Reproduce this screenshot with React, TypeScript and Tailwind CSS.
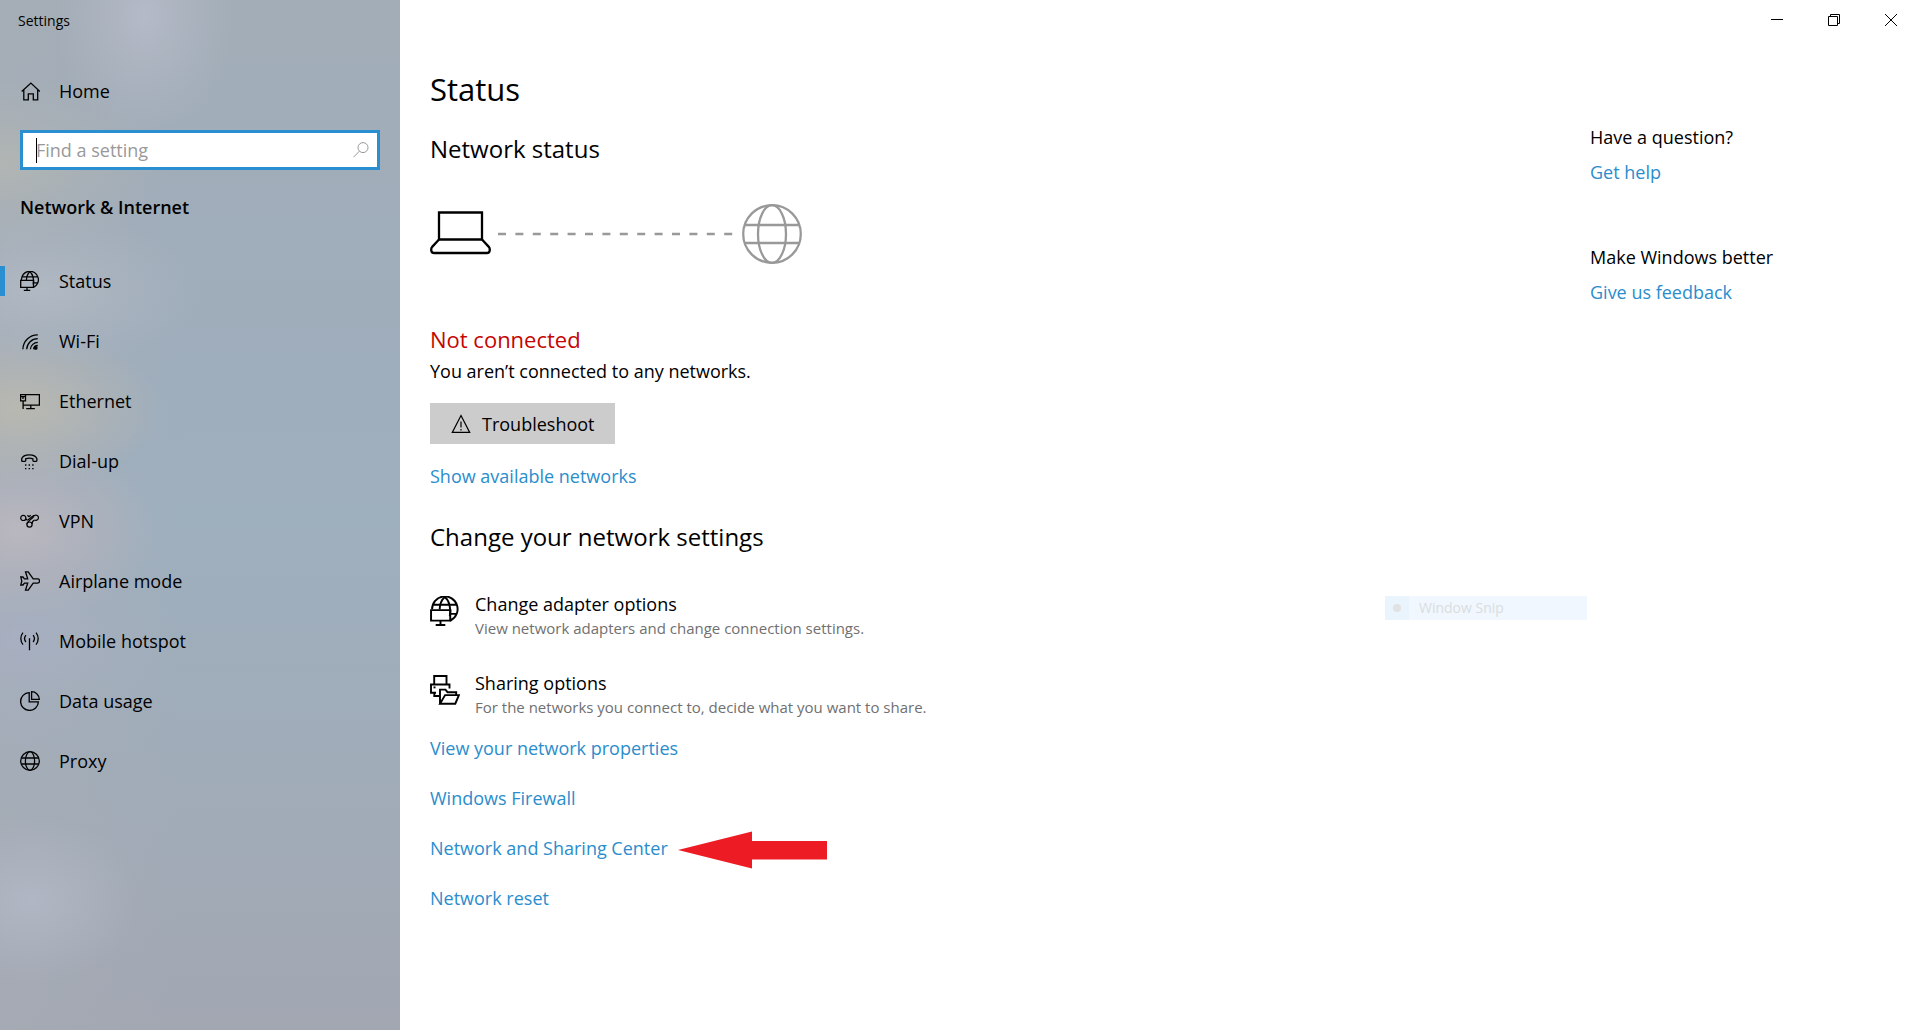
import type { ReactNode } from 'react'

type IconProps = { className?: string }

const StrokeIcon = ({ className = 'size-5', children }: IconProps & { children: ReactNode }) => (
  <svg viewBox="0 0 20 20" fill="none" stroke="currentColor" strokeWidth="1.3" className={className} aria-hidden>
    {children}
  </svg>
)

const HomeIcon = () => (
  <StrokeIcon>
    <path d="M1.7 10.6 10.9 2.1l9 8.5M3.8 9v9.8h4.5v-5.9h5v5.9h4.4V9" />
  </StrokeIcon>
)

const NetworkIcon = ({ className }: IconProps) => (
  <StrokeIcon className={className}>
    <path d="M1.4 8.9a8.5 8.5 0 1 1 12 7.6M2.2 5.8h15.6M13.6 11.9h4.6" />
    <path d="M9.9.7C7.6 2.6 6.6 5.4 6.4 9M9.9.7c2.8 2.2 4.4 7.6 3.3 12.8" />
    <path d="M.7 9.4h12.8v7H.7zM7 16.4v2.9M3.8 19.3h6.4" />
  </StrokeIcon>
)

const WifiIcon = () => (
  <StrokeIcon>
    <path d="M2.9 18.3A14.6 14.6 0 0 1 17.8 3.9M6.7 18.3A11 11 0 0 1 17.8 7.7M10.4 18.3a7.4 7.4 0 0 1 7.4-6.9M13.6 18.3a4.2 4.2 0 0 1 4.2-3.8" />
    <circle cx="15.7" cy="16.9" r="1.3" fill="currentColor" />
  </StrokeIcon>
)

const EthernetIcon = () => (
  <StrokeIcon>
    <path d="M5.5 3.6h13.9v10.6H3.2M10.8 14.2v3.5M6.2 17.6h8.6M3.1 10v8" />
    <path d="M.6 3.6h4.9v6.2H.6zM.6 5.6h4.9M3 5.6V8" />
  </StrokeIcon>
)

const DialUpIcon = () => (
  <StrokeIcon>
    <path d="M1.7 9.6V7.8C3.3 2.5 15.3 2.5 16.9 7.8v1.8q0 .8-.8.8h-2.4q-.8 0-.8-.8V7.8q-3.6-1.2-7.2 0v1.8q0 .8-.8.8H2.5q-.8 0-.8-.8Z" />
    <path d="M5 14h1.4M8.6 14H10M12.2 14h1.4M5 17.7h1.4M8.6 17.7H10M12.2 17.7h1.4" />
  </StrokeIcon>
)

const VpnIcon = () => (
  <StrokeIcon>
    <g strokeWidth="1.2">
      <circle cx="3.3" cy="6.9" r="2.6" />
      <circle cx="9.5" cy="13.6" r="2.6" />
      <path d="M13.3 6.3a2.6 2.6 0 1 1 1.3 2.7M5.7 7.9c.9 1.4 2 1.4 3.2.4l3.7-3.1c.9-.8 1.900-1 3.1-.9" />
      <path d="M6.900 13.200c0-1.700.900-2.400 2.100-3.300l4.300-3.600M12 13c0-2.200.900-3.200 2.600-4" />
      <path d="M7.400 4.200 9 5.600l1.700-1.400" />
    </g>
  </StrokeIcon>
)

const AirplaneIcon = () => (
  <StrokeIcon>
    <path d="M5.5.8h2.7l5 7.100h4.400c2.600 0 2.600 4.200 0 4.200h-4.400l-5 7.100H5.500l2.200-7.100H4.400L3 14H.8l1-4-1-4H3l1.400 1.900h3.300Z" />
  </StrokeIcon>
)

const HotspotIcon = () => (
  <StrokeIcon>
    <path d="M9.5 7.200v12M5.900 4.200c-1.600 2-1.600 4.800 0 6.800M13.100 4.200c1.600 2 1.600 4.800 0 6.800M3 1.600C.1 5 .1 10.200 3 13.600M16 1.600c2.900 3.400 2.900 8.600 0 12" />
  </StrokeIcon>
)

const DataUsageIcon = () => (
  <StrokeIcon>
    <path d="M9.2 1.6a8.9 8.9 0 1 0 9.2 9.2H9.2Z" />
    <path d="M11.6.7v7.6h7.7A7.7 7.7 0 0 0 11.6.7Z" />
  </StrokeIcon>
)

const GlobeIcon = ({ className }: IconProps) => (
  <StrokeIcon className={className}>
    <circle cx="10" cy="10" r="9.3" />
    <ellipse cx="10" cy="10" rx="4.6" ry="9.3" />
    <path d="M1.2 7h17.6M1.2 13h17.6" />
  </StrokeIcon>
)

const SearchIcon = () => (
  <svg viewBox="0 0 16 16" fill="none" stroke="currentColor" className="size-4" aria-hidden>
    <circle cx="10" cy="5.6" r="5" />
    <path d="M6.4 9.2.5 15.2" />
  </svg>
)

const SharingIcon = () => (
  <svg viewBox="0 0 30 30" fill="none" stroke="currentColor" strokeWidth="1.9" className="size-[30px]" aria-hidden>
    <path d="M4.2 9.5V1h12.3v8.5M6 17.8H1V9.5h18.5v4M4.3 17.5v3.5h4.9" />
    <path d="M3.5 12.4h2" />
    <path d="M10 28.7V14.6h5.5l2 2.6h8.7v2.9M10 28.7h15.3l3.6-8.6H15.1L10 28.7Z" />
  </svg>
)

const WarningIcon = () => (
  <StrokeIcon>
    <path d="M10 1.5 18.7 18.4H1.3ZM10 7.5v6M10 15v1.5" strokeWidth="1.2" />
  </StrokeIcon>
)

const NAV_ITEMS = [
  { label: 'Status', icon: <NetworkIcon />, active: true },
  { label: 'Wi-Fi', icon: <WifiIcon /> },
  { label: 'Ethernet', icon: <EthernetIcon /> },
  { label: 'Dial-up', icon: <DialUpIcon /> },
  { label: 'VPN', icon: <VpnIcon /> },
  { label: 'Airplane mode', icon: <AirplaneIcon /> },
  { label: 'Mobile hotspot', icon: <HotspotIcon /> },
  { label: 'Data usage', icon: <DataUsageIcon /> },
  { label: 'Proxy', icon: <GlobeIcon /> },
]

const OPTIONS = [
  {
    title: 'Change adapter options',
    text: 'View network adapters and change connection settings.',
    icon: <NetworkIcon className="size-[30px]" />,
  },
  {
    title: 'Sharing options',
    text: 'For the networks you connect to, decide what you want to share.',
    icon: <SharingIcon />,
  },
]

const Link = ({ children }: { children: ReactNode }) => (
  <a href="#" className="text-[#2a8dcd]">
    {children}
  </a>
)

const Sidebar = () => (
  <aside className="w-100 shrink-0 bg-[radial-gradient(ellipse_90px_120px_at_145px_15px,#b9bdcbcc,#b3b9c677_50%,transparent),radial-gradient(ellipse_160px_90px_at_0px_165px,#b4b8b2cc,#b0b5b466_50%,transparent),radial-gradient(ellipse_160px_80px_at_40px_290px,#b4bcc5cc,#b0b9c366_50%,transparent),radial-gradient(ellipse_140px_80px_at_20px_408px,#bab9b0ee,#b5b6b299_50%,transparent),radial-gradient(ellipse_140px_90px_at_20px_530px,#bdb8bfdd,#b6b4bc88_50%,transparent),radial-gradient(ellipse_160px_110px_at_20px_640px,#a9b0c4aa,#a7afbf66_50%,transparent),radial-gradient(ellipse_110px_85px_at_30px_900px,#b2b9c6dd,#aeb5c199_50%,transparent),linear-gradient(to_right,#a9adb577,transparent_45%),linear-gradient(#a2adb7,#9fadbb_30%,#9eafbe_50%,#a0acb8_75%,#a2a7b2)]">
    <p className="px-[18px] pt-[11px] text-[14px] leading-5">Settings</p>
    <a href="#" className="mt-[30px] flex h-15 items-center gap-[19px] px-5">
      <HomeIcon />
      Home
    </a>
    <label className="relative mx-5 mt-[9px] flex h-10 items-center border-[3px] border-[#2a8fd0] bg-white pr-2 text-[#999]">
      <span className="absolute left-[13px] h-[25px] w-px bg-black" />
      <input
        type="text"
        aria-label="Find a setting"
        placeholder="Find a setting"
        className="min-w-0 flex-1 pl-[13px] text-black outline-none placeholder:text-[#999]"
      />
      <SearchIcon />
    </label>
    <h2 className="mt-[25px] px-5 font-semibold">Network &amp; Internet</h2>
    <nav className="mt-8">
      {NAV_ITEMS.map(({ label, icon, active }) => (
        <a
          key={label}
          href="#"
          aria-current={active ? 'page' : undefined}
          className="flex h-15 items-center"
        >
          <span className={active ? 'h-[30px] w-[5px] bg-[#2a8fd0]' : 'w-[5px]'} />
          <span className="ml-[15px] mr-[19px]">{icon}</span>
          {label}
        </a>
      ))}
    </nav>
  </aside>
)

const WindowControls = () => (
  <div className="flex h-10 justify-end pr-px">
    <button aria-label="Minimize" className="flex h-10 w-[57px] items-center justify-center">
      <svg viewBox="0 0 12 12" stroke="currentColor" fill="none" className="size-3" aria-hidden>
        <path d="M0 5.5h12" />
      </svg>
    </button>
    <button aria-label="Restore" className="flex h-10 w-[57px] items-center justify-center">
      <svg viewBox="0 0 12 12" stroke="currentColor" fill="none" className="size-3" aria-hidden>
        <path d="M.5 2.5h9v9h-9zM2.5 2.5v-2h9v9h-2" />
      </svg>
    </button>
    <button aria-label="Close" className="flex h-10 w-[57px] items-center justify-center">
      <svg viewBox="0 0 12 12" stroke="currentColor" fill="none" className="size-3" aria-hidden>
        <path d="m0 0 12 12M12 0 0 12" />
      </svg>
    </button>
  </div>
)

const ConnectionDiagram = () => (
  <svg viewBox="0 0 373 60" fill="none" strokeWidth="2.3" className="mt-[39px] h-[60px] w-[373px]" aria-hidden>
    <g stroke="#000">
      <path d="M9 8.5h43v27H9z" />
      <path d="M9 35.5 2.4 42.6c-2 2.3-1.4 6.4 1.6 6.4h53c3 0 3.6-4.1 1.6-6.4L52 35.5" />
    </g>
    <g stroke="#999">
      <path d="M68 30h235" strokeDasharray="8 9.4" />
      <circle cx="342" cy="30" r="28.8" />
      <ellipse cx="342" cy="30" rx="14" ry="28.8" />
      <path d="M314.5 21h55M314.5 39h55" />
    </g>
  </svg>
)

const StatusPage = () => (
  <div className="min-w-0 flex-1">
    <h1 className="text-[31px] leading-10">Status</h1>
    <h2 className="mt-6 text-2xl">Network status</h2>
    <ConnectionDiagram />
    <p className="mt-[59px] text-[22px] leading-8 text-[#c50500]">Not connected</p>
    <p className="mt-1">You aren’t connected to any networks.</p>
    <button className="mt-5 flex h-[41px] items-center gap-[11px] bg-[#ccc] pr-5 pl-[21px]">
      <WarningIcon />
      Troubleshoot
    </button>
    <p className="mt-5">
      <Link>Show available networks</Link>
    </p>
    <h2 className="mt-[33px] text-2xl">Change your network settings</h2>
    <div className="mt-[39px] flex flex-col gap-[33px]">
      {OPTIONS.map(({ title, text, icon }) => (
        <a key={title} href="#" className="flex gap-[15px]">
          <span className="pt-1">{icon}</span>
          <span>
            <span className="block">{title}</span>
            <span className="mt-[2px] block text-[15px] leading-5 text-[#707070]">{text}</span>
          </span>
        </a>
      ))}
    </div>
    <ul className="mt-[19px] flex flex-col gap-[26px]">
      <li>
        <Link>View your network properties</Link>
      </li>
      <li>
        <Link>Windows Firewall</Link>
      </li>
      <li className="flex h-6 items-center gap-[10px]">
        <Link>Network and Sharing Center</Link>
        <svg viewBox="0 0 149 42" fill="#ed1c24" className="h-[42px] w-[149px]" aria-hidden>
          <path d="M0 23 74 4.500V14h75v18.500H74v9Z" />
        </svg>
      </li>
      <li>
        <Link>Network reset</Link>
      </li>
    </ul>
  </div>
)

const HelpPanel = () => (
  <aside className="w-[330px] shrink-0 pt-14">
    <p>Have a question?</p>
    <p className="mt-[11px]">
      <Link>Get help</Link>
    </p>
    <p className="mt-[61px]">Make Windows better</p>
    <p className="mt-[11px]">
      <Link>Give us feedback</Link>
    </p>
  </aside>
)

// fading remains of the snipping menu
const SnipGhost = () => (
  <div className="absolute top-[596px] right-[333px] flex h-6 w-[202px] items-center bg-[#f0f7fe] text-[14px] text-[#dadde0]">
    <span className="flex size-6 items-center justify-center bg-[#e9f4fd]">
      <span className="size-2 rounded-full bg-[#e0e2e4]" />
    </span>
    <span className="ml-[10px]">Window Snip</span>
  </div>
)

export default function App() {
  return (
    <div className="relative flex min-h-screen bg-white font-['Open_Sans','Noto_Sans',sans-serif] text-[18px] leading-6 text-black">
      <Sidebar />
      <main className="min-w-0 flex-1">
        <WindowControls />
        <div className="flex pt-[29px] pl-[30px]">
          <StatusPage />
          <HelpPanel />
        </div>
      </main>
      <SnipGhost />
    </div>
  )
}
